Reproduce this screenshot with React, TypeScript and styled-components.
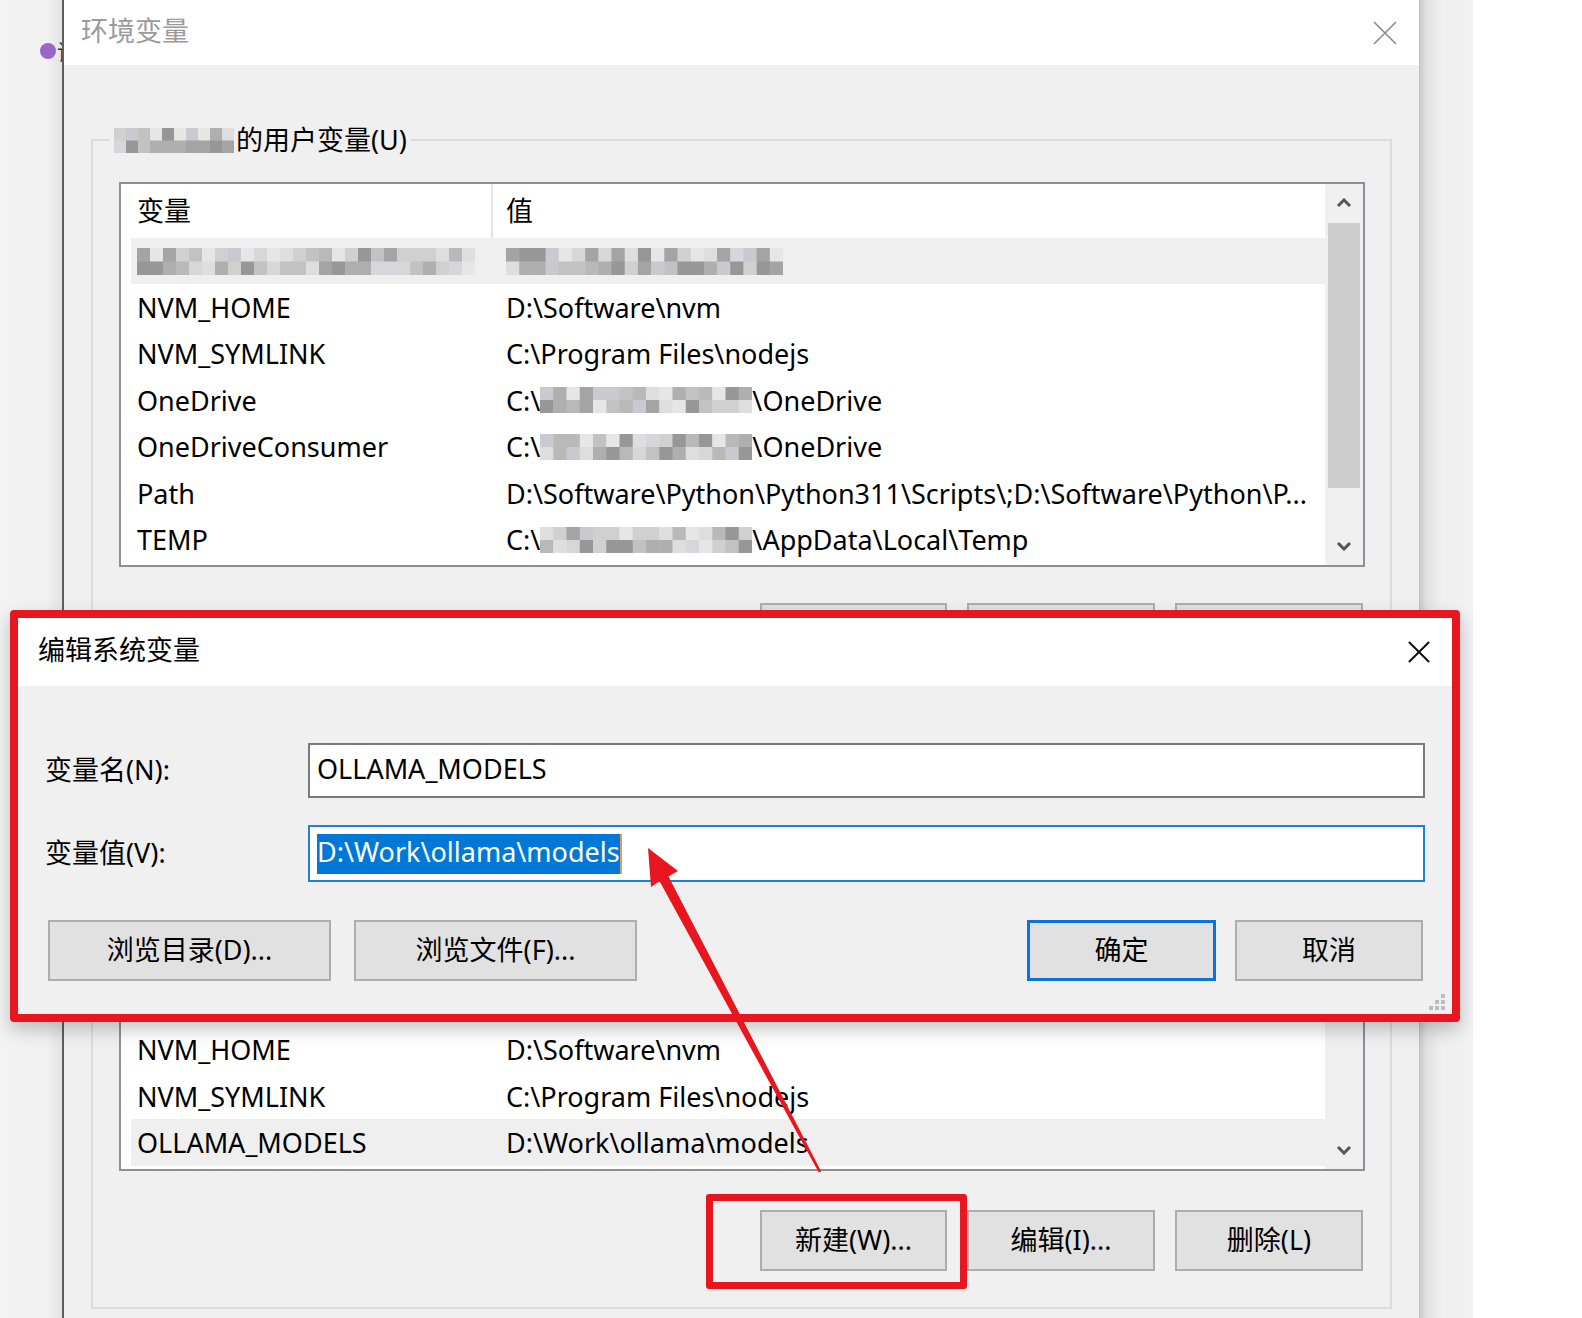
import React from 'react';
import styled, { createGlobalStyle } from 'styled-components';

const RED = '#e8161f';
const UI_FONT = `"Noto Sans", "Noto Sans CJK SC", sans-serif`;

const GlobalStyle = createGlobalStyle`
  html, body {
    margin: 0;
    padding: 0;
    background: #fff;
  }
  * {
    box-sizing: border-box;
  }
`;

const Page = styled.div`
  position: relative;
  display: flex;
  width: 1582px;
  height: 1318px;
  overflow: hidden;
  background: #fff;
  font-family: ${UI_FONT};
  font-size: 27px;
  color: #000;
`;

/* ---------- desktop strips around the main window ---------- */

const LeftGutter = styled.div`
  width: 62px;
  flex: none;
  overflow: hidden;
  display: flex;
  align-items: flex-start;
  padding: 43px 0 0 40px;
  background: linear-gradient(90deg, #f3f3f3 0, #f1f1f1 75%, #e4e4e4 100%);
`;

const Dot = styled.span`
  width: 16px;
  height: 16px;
  flex: none;
  border-radius: 50%;
  background: #9a66c8;
`;

const HiddenChar = styled.span`
  flex: none;
  margin: -3px 0 0 1px;
  font-size: 22px;
  line-height: 22px;
  color: #333;
`;

const RightGutter = styled.div`
  width: 53px;
  flex: none;
  background: linear-gradient(90deg, #cbcbcb 0, #e3e3e3 7px, #efefef 22px, #f2f2f2 100%);
`;

const Desk = styled.div`
  flex: 1;
  background: #fff;
`;

/* ---------- main window ---------- */

const MainWindow = styled.div`
  width: 1358px;
  flex: none;
  display: flex;
  flex-direction: column;
  background: #f0f0f0;
  border-left: 2px solid #5e5e5e;
  border-right: 1px solid #c2c2c2;
`;

const TitleBar = styled.div`
  height: 65px;
  flex: none;
  display: flex;
  align-items: center;
  justify-content: space-between;
  padding: 0 22px 0 17px;
  background: #fff;
`;

const WindowTitle = styled.span<{ $muted?: boolean }>`
  margin-top: -5px;
  font-size: 27px;
  line-height: 1;
  color: ${({ $muted }) => ($muted ? '#9b9b9b' : '#000')};
`;

const WindowBody = styled.div`
  flex: 1;
  padding: 59px 27px 0;
`;

const GroupBox = styled.fieldset<{ $top?: number }>`
  margin: ${({ $top }) => $top ?? 0}px 0 0;
  padding: 26px 25px 36px 26px;
  min-width: 0;
  border: 2px solid #dcdcdc;
`;

const GroupLabel = styled.legend`
  display: flex;
  align-items: center;
  height: 32px;
  padding: 0 4px;
  margin-left: -9px;
  font-size: 27px;
  line-height: 32px;
  white-space: nowrap;
`;

const ListView = styled.div<{ $height: number }>`
  height: ${({ $height }) => $height}px;
  display: flex;
  overflow: hidden;
  background: #fff;
  border: 2px solid #8d8f94;
`;

const ListContent = styled.div`
  flex: 1;
  min-width: 0;
  padding-left: 10px;
`;

const HeaderRow = styled.div`
  display: grid;
  grid-template-columns: 360px 2px 1fr;
  height: 54px;
  align-items: center;
`;

const HeaderCell = styled.div<{ $pad: number }>`
  padding-left: ${({ $pad }) => $pad}px;
  padding-bottom: 3px;
  white-space: nowrap;
`;

const HeaderDivider = styled.div`
  align-self: stretch;
  background: #e5e5e5;
`;

const Row = styled.div<{ $selected?: boolean }>`
  display: grid;
  grid-template-columns: 369px 1fr;
  height: 46.4px;
  padding-left: 6px;
  align-items: center;
  white-space: pre;
  background: ${({ $selected }) => ($selected ? '#efefef' : 'transparent')};
`;

const Cell = styled.div`
  display: flex;
  align-items: center;
  overflow: hidden;
  white-space: pre;
`;

const ScrollBar = styled.div`
  width: 38px;
  flex: none;
  display: flex;
  flex-direction: column;
  background: #f0f0f0;
`;

const ScrollArrow = styled.div`
  height: 38px;
  flex: none;
  display: flex;
  align-items: center;
  justify-content: center;
`;

const ScrollTrack = styled.div`
  flex: 1;
  padding: 0 3px;
`;

const ScrollThumb = styled.div<{ $top: number; $height: number }>`
  margin-top: ${({ $top }) => $top}px;
  height: ${({ $height }) => $height}px;
  background: #cdcdcd;
`;

const ButtonRow = styled.div<{ $top: number }>`
  display: flex;
  justify-content: flex-end;
  gap: 20px;
  margin-top: ${({ $top }) => $top}px;
  padding-right: 2px;
`;

const PushButton = styled.button<{ $width: number; $primary?: boolean }>`
  width: ${({ $width }) => $width}px;
  height: 61px;
  flex: none;
  padding: 0 0 5px;
  font-family: ${UI_FONT};
  font-size: 27px;
  color: #000;
  background: #e1e1e1;
  border: ${({ $primary }) => ($primary ? '3px solid #0a74da' : '2px solid #adadad')};
`;

/* ---------- edit dialog ---------- */

const EditDialog = styled.div`
  position: absolute;
  left: 10px;
  top: 610px;
  width: 1450px;
  height: 412px;
  display: flex;
  flex-direction: column;
  background: #f0f0f0;
  border: 8px solid ${RED};
  border-radius: 4px;
  box-shadow: 0 8px 18px rgba(0, 0, 0, 0.22);
`;

const DialogTitleBar = styled(TitleBar)`
  height: 68px;
  padding: 0 22px 0 20px;
`;

const DialogBody = styled.div`
  flex: 1;
  display: flex;
  flex-direction: column;
  padding: 57px 27px 0;
`;

const FieldRow = styled.div<{ $top?: number }>`
  display: grid;
  grid-template-columns: 263px 1fr;
  align-items: center;
  margin-top: ${({ $top }) => $top ?? 0}px;
`;

const FieldLabel = styled.span`
  margin-top: -4px;
  white-space: nowrap;
`;

const TextBox = styled.div<{ $focused?: boolean; $height: number }>`
  height: ${({ $height }) => $height}px;
  display: flex;
  align-items: center;
  padding: 0 0 4px 7px;
  background: #fff;
  border: 2px solid ${({ $focused }) => ($focused ? '#1f7fdc' : '#7a7a7a')};
  white-space: pre;
`;

const Selection = styled.span`
  height: 40px;
  line-height: 36px;
  margin-top: 4px;
  color: #fff;
  background: #0078d7;
`;

const Caret = styled.span`
  width: 2px;
  height: 40px;
  margin-top: 4px;
  background: #e09a62;
`;

const DialogButtons = styled.div`
  display: flex;
  justify-content: space-between;
  margin: 38px 2px 0 3px;
`;

const ButtonGroup = styled.div<{ $gap: number }>`
  display: flex;
  gap: ${({ $gap }) => $gap}px;
`;

const Grip = styled.svg`
  position: absolute;
  right: 6px;
  bottom: 3px;
`;

/* ---------- annotations drawn over the screenshot ---------- */

const Highlight = styled.div`
  position: absolute;
  left: 706px;
  top: 1194px;
  width: 261px;
  height: 95px;
  border: 7px solid ${RED};
  border-radius: 3px;
  pointer-events: none;
`;

const Overlay = styled.svg`
  position: absolute;
  left: 0;
  top: 0;
  pointer-events: none;
`;

/* ---------- drawings ---------- */

const CloseGlyph = ({ size, color, weight }: { size: number; color: string; weight: number }) => (
  <svg width={size} height={size} viewBox="0 0 24 24">
    <path d="M1 1L23 23M23 1L1 23" stroke={color} strokeWidth={weight} fill="none" />
  </svg>
);

const Chevron = ({ down }: { down?: boolean }) => (
  <svg width="16" height="10" viewBox="0 0 16 10">
    <path
      d={down ? 'M2 2L8 8L14 2' : 'M2 8L8 2L14 8'}
      stroke="#555"
      strokeWidth="3"
      fill="none"
    />
  </svg>
);

const SHADES = [
  '#e6e6e6', '#dedede', '#d7d7db', '#d0d0d0', '#c9c9cf', '#c2c2c2',
  '#b9b9b9', '#afafaf', '#a4a4a4', '#979797',
];

// pixelated block used where names were blurred out
const Mosaic = ({
  width,
  height,
  cols,
  seed,
  rows = 2,
}: {
  width: number;
  height: number;
  cols: number;
  seed: number;
  rows?: number;
}) => {
  let s = seed;
  const rand = () => {
    s = (s * 9301 + 49297) % 233280;
    return s / 233280;
  };
  const cw = width / cols;
  const ch = height / rows;
  const cells = [];
  for (let r = 0; r < rows; r++) {
    for (let c = 0; c < cols; c++) {
      const bias = r === rows - 1 ? 0.2 : 0;
      const v = Math.min(0.999, Math.pow(rand(), 1.15) + bias * rand());
      cells.push(
        <rect
          key={`${r}-${c}`}
          x={c * cw}
          y={r * ch}
          width={cw + 0.5}
          height={ch + 0.5}
          fill={SHADES[Math.floor(v * SHADES.length)]}
        />
      );
    }
  }
  return (
    <svg width={width} height={height} style={{ flex: 'none' }}>
      {cells}
    </svg>
  );
};

type VarRow = { name: React.ReactNode; value: React.ReactNode; selected?: boolean };

const userVars: VarRow[] = [
  {
    name: <Mosaic width={338} height={27} cols={26} seed={17} />,
    value: <Mosaic width={277} height={27} cols={21} seed={91} />,
    selected: true,
  },
  { name: 'NVM_HOME', value: 'D:\\Software\\nvm' },
  { name: 'NVM_SYMLINK', value: 'C:\\Program Files\\nodejs' },
  {
    name: 'OneDrive',
    value: (
      <>
        {'C:\\'}
        <Mosaic width={212} height={26} cols={16} seed={33} />
        {'\\OneDrive'}
      </>
    ),
  },
  {
    name: 'OneDriveConsumer',
    value: (
      <>
        {'C:\\'}
        <Mosaic width={212} height={26} cols={16} seed={58} />
        {'\\OneDrive'}
      </>
    ),
  },
  { name: 'Path', value: 'D:\\Software\\Python\\Python311\\Scripts\\;D:\\Software\\Python\\P...' },
  {
    name: 'TEMP',
    value: (
      <>
        {'C:\\'}
        <Mosaic width={212} height={26} cols={16} seed={74} />
        {'\\AppData\\Local\\Temp'}
      </>
    ),
  },
];

const systemVars: VarRow[] = [
  { name: 'ComSpec', value: 'C:\\Windows\\system32\\cmd.exe' },
  { name: 'DriverData', value: 'C:\\Windows\\System32\\Drivers\\DriverData' },
  { name: 'JAVA_HOME', value: 'D:\\Software\\Java\\jdk-17' },
  { name: 'NUMBER_OF_PROCESSORS', value: '16' },
  { name: 'NVM_HOME', value: 'D:\\Software\\nvm' },
  { name: 'NVM_SYMLINK', value: 'C:\\Program Files\\nodejs' },
  { name: 'OLLAMA_MODELS', value: 'D:\\Work\\ollama\\models', selected: true },
];

const VariableList = ({
  rows,
  height,
  thumbTop,
  thumbHeight,
}: {
  rows: VarRow[];
  height: number;
  thumbTop: number;
  thumbHeight: number;
}) => (
  <ListView $height={height}>
    <ListContent>
      <HeaderRow>
        <HeaderCell $pad={6}>变量</HeaderCell>
        <HeaderDivider />
        <HeaderCell $pad={13}>值</HeaderCell>
      </HeaderRow>
      {rows.map((row, i) => (
        <Row key={i} $selected={row.selected}>
          <Cell>{row.name}</Cell>
          <Cell>{row.value}</Cell>
        </Row>
      ))}
    </ListContent>
    <ScrollBar>
      <ScrollArrow>
        <Chevron />
      </ScrollArrow>
      <ScrollTrack>
        <ScrollThumb $top={thumbTop} $height={thumbHeight} />
      </ScrollTrack>
      <ScrollArrow>
        <Chevron down />
      </ScrollArrow>
    </ScrollBar>
  </ListView>
);

const ListButtons = ({ top }: { top: number }) => (
  <ButtonRow $top={top}>
    <PushButton $width={187}>新建(W)...</PushButton>
    <PushButton $width={188}>编辑(I)...</PushButton>
    <PushButton $width={188}>删除(L)</PushButton>
  </ButtonRow>
);

export default function App() {
  return (
    <>
      <GlobalStyle />
      <Page>
        <LeftGutter>
          <Dot />
          <HiddenChar>读</HiddenChar>
        </LeftGutter>

        <MainWindow>
          <TitleBar>
            <WindowTitle $muted>环境变量</WindowTitle>
            <CloseGlyph size={24} color="#8a8a8a" weight={1.6} />
          </TitleBar>
          <WindowBody>
            <GroupBox>
              <GroupLabel>
                <Mosaic width={120} height={25} cols={10} seed={5} />
                <span style={{ marginLeft: 2 }}>的用户变量(U)</span>
              </GroupLabel>
              <VariableList rows={userVars} height={385} thumbTop={1} thumbHeight={265} />
              <ListButtons top={36} />
            </GroupBox>

            <GroupBox $top={25}>
              <GroupLabel>系统变量(S)</GroupLabel>
              <VariableList rows={systemVars} height={386} thumbTop={20} thumbHeight={150} />
              <ListButtons top={39} />
            </GroupBox>
          </WindowBody>
        </MainWindow>

        <RightGutter />
        <Desk />

        <EditDialog>
          <DialogTitleBar>
            <WindowTitle>编辑系统变量</WindowTitle>
            <CloseGlyph size={22} color="#111" weight={2.2} />
          </DialogTitleBar>
          <DialogBody>
            <FieldRow>
              <FieldLabel>变量名(N):</FieldLabel>
              <TextBox $height={55}>OLLAMA_MODELS</TextBox>
            </FieldRow>
            <FieldRow $top={27}>
              <FieldLabel>变量值(V):</FieldLabel>
              <TextBox $height={57} $focused>
                <Selection>D:\Work\ollama\models</Selection>
                <Caret />
              </TextBox>
            </FieldRow>
            <DialogButtons>
              <ButtonGroup $gap={23}>
                <PushButton $width={283}>浏览目录(D)...</PushButton>
                <PushButton $width={283}>浏览文件(F)...</PushButton>
              </ButtonGroup>
              <ButtonGroup $gap={19}>
                <PushButton $width={189} $primary>
                  确定
                </PushButton>
                <PushButton $width={188}>取消</PushButton>
              </ButtonGroup>
            </DialogButtons>
          </DialogBody>
          <Grip width="18" height="18" viewBox="0 0 18 18">
            {[
              [13, 1],
              [7, 7],
              [13, 7],
              [1, 13],
              [7, 13],
              [13, 13],
            ].map(([x, y]) => (
              <rect key={`${x}-${y}`} x={x} y={y} width="4" height="4" fill="#bdbdbd" />
            ))}
          </Grip>
        </EditDialog>

        <Highlight />

        <Overlay width="1582" height="1318" viewBox="0 0 1582 1318">
          <polygon
            points="648,848 678,871 668.5,876.5 821.2,1171.4 818.8,1172.6 659.6,881.3 651,887"
            fill={RED}
          />
        </Overlay>
      </Page>
    </>
  );
}
